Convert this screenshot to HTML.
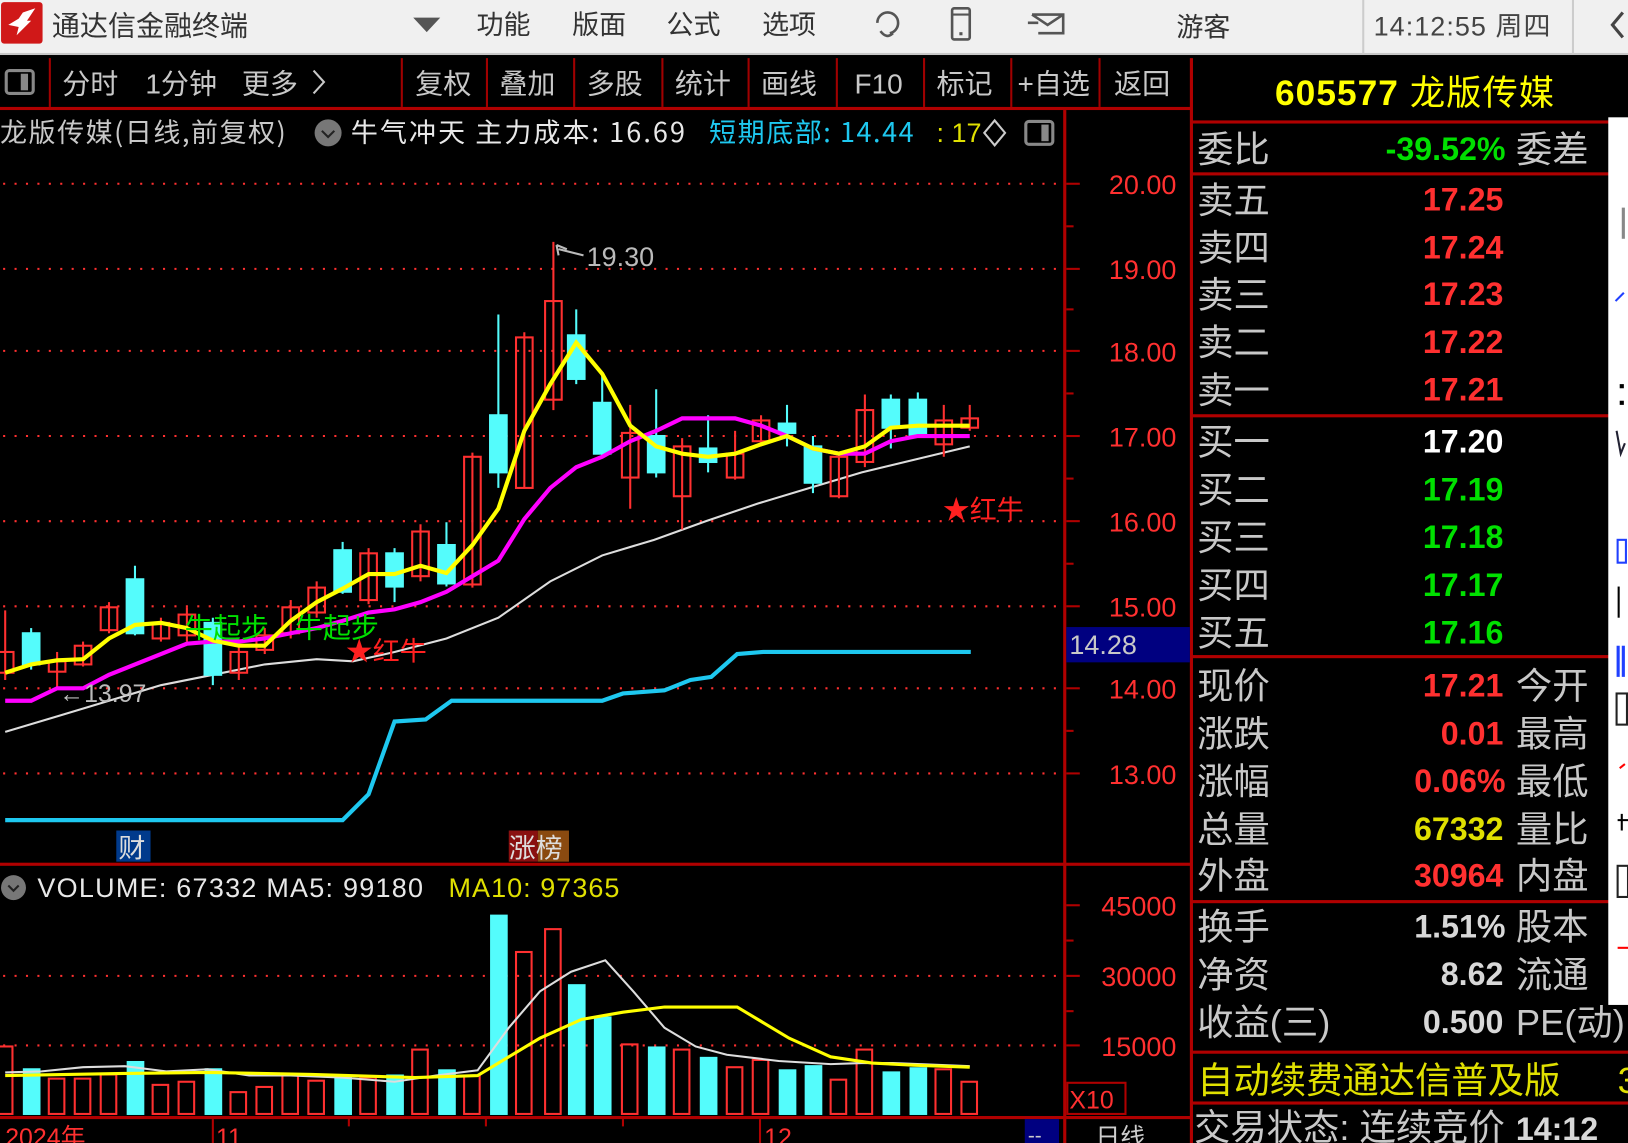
<!DOCTYPE html>
<html><head><meta charset="utf-8">
<style>
html,body{margin:0;padding:0;background:#000;overflow:hidden;width:1628px;height:1143px}
#w{position:absolute;left:0;top:0;width:1568px;height:1101px;transform:scale(1.03827,1.03815);transform-origin:0 0;background:#000}
svg{position:absolute;left:0;top:0}
text{font-family:"Liberation Sans","Noto Sans CJK SC",sans-serif}
.c{font-family:"Noto Sans CJK SC","WenQuanYi Zen Hei",sans-serif}
</style></head><body><div id="w">
<svg width="1568" height="1101" viewBox="0 0 1568 1101">
<rect x="0" y="0" width="1568" height="52" fill="#f0f0f0"/>
<rect x="0" y="51" width="1568" height="2" fill="#c8c8c8"/>
<rect x="1" y="2" width="40" height="40" rx="3" fill="#d01818"/>
<path d="M8 24 L18 18 L22 12 L34 8 L26 20 L30 20 L16 34 L18 26 Z" fill="#fff"/>
<text x="50" y="34" font-size="27" fill="#333" class="c">通达信金融终端</text>
<path d="M398 17 L424 17 L411 31 Z" fill="#555"/>
<g font-size="26" fill="#333" class="c">
<text x="459" y="33">功能</text><text x="551" y="33">版面</text><text x="642" y="33">公式</text><text x="734" y="33">选项</text>
<text x="1133" y="35">游客</text></g>
<path d="M845 22 a10 10 0 1 1 20 0 a10 10 0 0 1 -8 10 M848 30 q6 8 12 2" stroke="#555" stroke-width="2.5" fill="none"/>
<rect x="917" y="8" width="17" height="30" rx="2" stroke="#555" stroke-width="2.5" fill="none"/><line x1="917" y1="14" x2="934" y2="14" stroke="#555" stroke-width="2"/><rect x="924" y="31" width="3" height="3" fill="#555"/>
<path d="M994 14 L1024 14 L1024 32 L1000 32 M994 14 L1009 24 L1024 14 M990 22 L1000 22" stroke="#555" stroke-width="2.5" fill="none"/>
<line x1="1313" y1="0" x2="1313" y2="52" stroke="#ccc" stroke-width="2"/>
<line x1="1515" y1="0" x2="1515" y2="52" stroke="#ccc" stroke-width="2"/>
<text x="1323" y="34" font-size="26" fill="#444" letter-spacing="1">14:12:55 <tspan class="c">周四</tspan></text>
<path d="M1563 12 L1553 24 L1563 36" stroke="#444" stroke-width="3" fill="none"/>

<rect x="6" y="68" width="26" height="22" rx="3" stroke="#888" stroke-width="3" fill="none"/><rect x="20" y="71" width="7" height="16" fill="#888"/>
<g stroke="#a00000" stroke-width="2">
<line x1="48" y1="56" x2="48" y2="103"/><line x1="387" y1="56" x2="387" y2="103"/><line x1="469" y1="56" x2="469" y2="103"/><line x1="553" y1="56" x2="553" y2="103"/><line x1="638" y1="56" x2="638" y2="103"/><line x1="721" y1="56" x2="721" y2="103"/><line x1="806" y1="56" x2="806" y2="103"/><line x1="890" y1="56" x2="890" y2="103"/><line x1="974" y1="56" x2="974" y2="103"/><line x1="1059" y1="56" x2="1059" y2="103"/></g>
<rect x="0" y="103" width="1148" height="3" fill="#b00000"/>
<g font-size="27" fill="#c8c8c8" class="c">
<text x="60" y="90">分时</text><text x="140" y="90">1分钟</text><text x="233" y="90">更多</text>
<text x="400" y="90">复权</text><text x="481" y="90">叠加</text><text x="565" y="90">多股</text><text x="650" y="90">统计</text><text x="733" y="90">画线</text><text x="823" y="90" font-family="Liberation Sans">F10</text><text x="902" y="90">标记</text><text x="980" y="90">+自选</text><text x="1073" y="90">返回</text></g>
<path d="M302 68 L312 79 L302 90" stroke="#c8c8c8" stroke-width="2" fill="none"/>

<text x="0" y="137" font-size="26" fill="#c8c8c8" class="c" letter-spacing="1.5">龙版传媒(日线,前复权)</text>
<circle cx="316" cy="128" r="13" fill="#777"/><path d="M310 126 l6 6 l6 -6" stroke="#222" stroke-width="2" fill="none"/>
<text x="338" y="137" font-size="26" fill="#e8e8e8" class="c" letter-spacing="2">牛气冲天 主力成本: 16.69</text>
<text x="683" y="137" font-size="26" fill="#1ec8f0" class="c" letter-spacing="1.5">短期底部: 14.44</text>
<text x="902" y="137" font-size="26" fill="#e0e000">: 17</text>
<path d="M958 116 l10 12 l-10 12 l-10 -12 z" stroke="#ccc" stroke-width="2" fill="none"/>
<rect x="988" y="117" width="26" height="22" rx="3" stroke="#888" stroke-width="3" fill="none"/><rect x="1003" y="120" width="7" height="16" fill="#888"/>

<rect x="1024" y="106" width="3" height="995" fill="#b00000"/>
<rect x="1146" y="56" width="3" height="1045" fill="#b00000"/>
<g stroke="#ff3030" stroke-width="2" stroke-dasharray="2 9">
<line x1="3" y1="177" x2="1024" y2="177"/><line x1="3" y1="259" x2="1024" y2="259"/><line x1="3" y1="338" x2="1024" y2="338"/><line x1="3" y1="420" x2="1024" y2="420"/><line x1="3" y1="502" x2="1024" y2="502"/><line x1="3" y1="584" x2="1024" y2="584"/><line x1="3" y1="663" x2="1024" y2="663"/><line x1="3" y1="745" x2="1024" y2="745"/>
<line x1="3" y1="940" x2="1024" y2="940"/><line x1="3" y1="1007" x2="1024" y2="1007"/></g>
<g stroke="#b00000" stroke-width="2">
<line x1="1027" y1="177" x2="1040" y2="177"/><line x1="1027" y1="218" x2="1034" y2="218"/><line x1="1027" y1="259" x2="1040" y2="259"/><line x1="1027" y1="298" x2="1034" y2="298"/><line x1="1027" y1="338" x2="1040" y2="338"/><line x1="1027" y1="379" x2="1034" y2="379"/><line x1="1027" y1="420" x2="1040" y2="420"/><line x1="1027" y1="461" x2="1034" y2="461"/><line x1="1027" y1="502" x2="1040" y2="502"/><line x1="1027" y1="543" x2="1034" y2="543"/><line x1="1027" y1="584" x2="1040" y2="584"/><line x1="1027" y1="663" x2="1040" y2="663"/><line x1="1027" y1="704" x2="1034" y2="704"/><line x1="1027" y1="745" x2="1040" y2="745"/>
<line x1="1027" y1="872" x2="1040" y2="872"/><line x1="1027" y1="906" x2="1034" y2="906"/><line x1="1027" y1="940" x2="1040" y2="940"/><line x1="1027" y1="974" x2="1034" y2="974"/><line x1="1027" y1="1007" x2="1040" y2="1007"/></g>
<g font-size="26" fill="#ff3030" text-anchor="end">
<text x="1133" y="187">20.00</text><text x="1133" y="269">19.00</text><text x="1133" y="348">18.00</text><text x="1133" y="430">17.00</text><text x="1133" y="512">16.00</text><text x="1133" y="594">15.00</text><text x="1133" y="673">14.00</text><text x="1133" y="755">13.00</text>
<text x="1133" y="882">45000</text><text x="1133" y="950">30000</text><text x="1133" y="1017">15000</text></g>
<rect x="1027" y="604" width="119" height="34" fill="#000080"/>
<text x="1030" y="630" font-size="26" fill="#c8c8c8">14.28</text>
<rect x="1028" y="1043" width="56" height="30" fill="none" stroke="#b00000" stroke-width="2"/>
<text x="1030" y="1068" font-size="24" fill="#ff3030">X10</text>

<rect x="0" y="831" width="1148" height="3" fill="#b00000"/>
<rect x="0" y="1075" width="1148" height="3" fill="#b00000"/>

<polyline points="5,790 330,790 355,765 380,695 410,693 435,675 580,675 600,668 640,665 665,655 685,652 710,630 735,628 935,628" stroke="#1ec8f0" stroke-width="4" fill="none"/>
<polyline points="5,705 55,690 105,675 155,660 205,650 255,640 305,635 340,637 380,628 430,615 480,595 530,560 580,535 630,520 680,502 730,485 780,470 830,455 880,443 934,430" stroke="#ddd" stroke-width="2" fill="none"/>

<g stroke-width="2">
<g stroke="#ff3030" fill="none">
<line x1="5" y1="588" x2="5" y2="655"/><rect x="-3" y="628" width="16" height="20"/>
<line x1="55" y1="628" x2="55" y2="662"/><rect x="47" y="637" width="16" height="10"/>
<line x1="80" y1="618" x2="80" y2="642"/><rect x="72" y="622" width="16" height="18"/>
<line x1="105" y1="580" x2="105" y2="610"/><rect x="97" y="585" width="16" height="22"/>
<line x1="155" y1="595" x2="155" y2="618"/><rect x="147" y="600" width="16" height="15"/>
<line x1="180" y1="585" x2="180" y2="618"/><rect x="172" y="592" width="16" height="20"/>
<line x1="230" y1="620" x2="230" y2="655"/><rect x="222" y="628" width="16" height="20"/>
<line x1="255" y1="605" x2="255" y2="630"/><rect x="247" y="612" width="16" height="14"/>
<line x1="280" y1="578" x2="280" y2="615"/><rect x="272" y="585" width="16" height="25"/>
<line x1="305" y1="560" x2="305" y2="595"/><rect x="297" y="566" width="16" height="24"/>
<line x1="355" y1="528" x2="355" y2="582"/><rect x="347" y="533" width="16" height="45"/>
<line x1="405" y1="505" x2="405" y2="560"/><rect x="397" y="512" width="16" height="43"/>
<line x1="455" y1="436" x2="455" y2="566"/><rect x="447" y="440" width="16" height="123"/>
<line x1="505" y1="320" x2="505" y2="470"/><rect x="497" y="325" width="16" height="145"/>
<line x1="533" y1="233" x2="533" y2="395"/><rect x="525" y="290" width="16" height="95"/>
<line x1="607" y1="390" x2="607" y2="490"/><rect x="599" y="417" width="16" height="43"/>
<line x1="657" y1="422" x2="657" y2="510"/><rect x="649" y="430" width="16" height="48"/>
<line x1="708" y1="415" x2="708" y2="462"/><rect x="700" y="437" width="16" height="23"/>
<line x1="733" y1="400" x2="733" y2="430"/><rect x="725" y="405" width="16" height="20"/>
<line x1="808" y1="435" x2="808" y2="480"/><rect x="800" y="440" width="16" height="38"/>
<line x1="833" y1="380" x2="833" y2="450"/><rect x="825" y="395" width="16" height="50"/>
<line x1="909" y1="390" x2="909" y2="440"/><rect x="901" y="405" width="16" height="23"/>
<line x1="934" y1="390" x2="934" y2="415"/><rect x="926" y="403" width="16" height="9"/>
</g>
<g stroke="#54fcfc" fill="#54fcfc">
<line x1="30" y1="605" x2="30" y2="645"/><rect x="22" y="610" width="16" height="30"/>
<line x1="130" y1="545" x2="130" y2="612"/><rect x="122" y="558" width="16" height="52"/>
<line x1="205" y1="595" x2="205" y2="660"/><rect x="197" y="600" width="16" height="50"/>
<line x1="330" y1="522" x2="330" y2="572"/><rect x="322" y="530" width="16" height="40"/>
<line x1="380" y1="528" x2="380" y2="580"/><rect x="372" y="533" width="16" height="32"/>
<line x1="430" y1="503" x2="430" y2="565"/><rect x="422" y="525" width="16" height="37"/>
<line x1="480" y1="303" x2="480" y2="470"/><rect x="472" y="400" width="16" height="55"/>
<line x1="555" y1="298" x2="555" y2="370"/><rect x="547" y="323" width="16" height="42"/>
<line x1="580" y1="360" x2="580" y2="440"/><rect x="572" y="388" width="16" height="49"/>
<line x1="632" y1="375" x2="632" y2="460"/><rect x="624" y="420" width="16" height="35"/>
<line x1="682" y1="400" x2="682" y2="455"/><rect x="674" y="432" width="16" height="13"/>
<line x1="758" y1="390" x2="758" y2="430"/><rect x="750" y="408" width="16" height="9"/>
<line x1="783" y1="420" x2="783" y2="475"/><rect x="775" y="430" width="16" height="35"/>
<line x1="858" y1="380" x2="858" y2="432"/><rect x="850" y="385" width="16" height="27"/>
<line x1="884" y1="378" x2="884" y2="420"/><rect x="876" y="385" width="16" height="35"/>
</g></g>

<polyline points="5,675 30,675 55,663 80,663 105,650 130,640 155,630 180,620 205,618 230,618 255,615 280,610 305,605 330,598 355,590 380,587 405,580 430,570 455,555 480,540 505,500 530,470 555,450 580,440 607,425 632,415 657,403 682,403 708,403 733,410 758,420 783,432 808,437 833,437 858,425 884,420 909,420 934,420" stroke="#ff00ff" stroke-width="4" fill="none"/>
<polyline points="5,648 30,640 55,636 80,635 105,615 130,602 155,600 180,605 205,617 230,622 255,622 280,598 305,580 330,567 355,553 380,553 405,545 430,552 455,525 480,490 505,415 530,370 555,330 580,360 607,410 632,430 657,437 682,440 708,437 733,428 758,420 783,432 808,437 833,430 858,412 884,410 909,410 934,410" stroke="#ffff00" stroke-width="4" fill="none"/>

<g font-size="27" fill="#00e000" class="c"><text x="178" y="614">牛起步</text><text x="284" y="614">牛起步</text></g>
<g font-size="26" fill="#ff2020" class="c"><text x="333" y="636">★红牛</text><text x="908" y="500">★红牛</text></g>
<text x="57" y="676" font-size="24" fill="#bbb">←13.97</text>
<path d="M536 236 L538 246 M536 236 L546 240 M538 240 L562 246" stroke="#bbb" stroke-width="2" fill="none"/>
<text x="565" y="256" font-size="26" fill="#bbb">19.30</text>
<rect x="112" y="800" width="33" height="30" fill="#003a8c"/><text x="114" y="826" font-size="26" fill="#ddd" class="c">财</text>
<rect x="490" y="800" width="28" height="30" fill="#8a1010"/><rect x="518" y="800" width="30" height="30" fill="#8a4a10"/>
<text x="490" y="826" font-size="26" fill="#ddd" class="c">涨榜</text>

<circle cx="13" cy="855" r="12" fill="#777"/><path d="M8 853 l5 5 l5 -5" stroke="#222" stroke-width="2" fill="none"/>
<text x="36" y="864" font-size="26" fill="#e8e8e8" letter-spacing="1.2">VOLUME: 67332  MA5: 99180</text>
<text x="432" y="864" font-size="26" fill="#e0e000" letter-spacing="1">MA10: 97365</text>

<g stroke-width="2">
<g stroke="#ff3030" fill="none">
<rect x="-3" y="1008" width="15" height="65"/><rect x="47" y="1039" width="15" height="34"/><rect x="72" y="1039" width="15" height="34"/><rect x="97" y="1035" width="15" height="38"/><rect x="147" y="1045" width="15" height="28"/><rect x="172" y="1042" width="15" height="31"/><rect x="222" y="1052" width="15" height="21"/><rect x="247" y="1047" width="15" height="26"/><rect x="272" y="1035" width="15" height="38"/><rect x="297" y="1041" width="15" height="32"/><rect x="347" y="1038" width="15" height="35"/><rect x="397" y="1011" width="15" height="62"/><rect x="447" y="1036" width="15" height="37"/><rect x="497" y="917" width="15" height="156"/><rect x="525" y="895" width="15" height="178"/><rect x="599" y="1006" width="15" height="67"/><rect x="649" y="1011" width="15" height="62"/><rect x="700" y="1028" width="15" height="45"/><rect x="725" y="1021" width="15" height="52"/><rect x="800" y="1040" width="15" height="33"/><rect x="825" y="1011" width="15" height="62"/><rect x="901" y="1030" width="15" height="43"/><rect x="926" y="1042" width="15" height="31"/>
</g>
<g fill="#54fcfc">
<rect x="22" y="1029" width="17" height="45"/><rect x="122" y="1022" width="17" height="52"/><rect x="197" y="1029" width="17" height="45"/><rect x="372" y="1035" width="17" height="39"/><rect x="422" y="1030" width="17" height="44"/><rect x="472" y="881" width="17" height="193"/><rect x="547" y="948" width="17" height="126"/><rect x="572" y="979" width="17" height="95"/><rect x="624" y="1008" width="17" height="66"/><rect x="674" y="1018" width="17" height="56"/><rect x="750" y="1030" width="17" height="44"/><rect x="775" y="1026" width="17" height="48"/><rect x="850" y="1032" width="17" height="42"/><rect x="876" y="1028" width="17" height="46"/>
<rect x="322" y="1037" width="17" height="37"/>
</g></g>
<polyline points="5,1033 40,1032 80,1028 120,1027 160,1032 200,1030 240,1036 280,1036 330,1038 380,1042 420,1036 460,1031 490,990 520,955 550,936 583,925 610,955 640,990 670,1008 700,1016 750,1022 800,1025 830,1024 860,1024 934,1027" stroke="#ddd" stroke-width="2" fill="none"/>
<polyline points="5,1036 120,1034 200,1033 300,1035 400,1038 460,1036 520,1000 560,982 600,975 640,970 710,970 760,1000 800,1018 840,1024 880,1026 934,1028" stroke="#ffff00" stroke-width="3" fill="none"/>

<g stroke="#b00000" stroke-width="2"><line x1="205" y1="1078" x2="205" y2="1101"/><line x1="732" y1="1078" x2="732" y2="1101"/><line x1="336" y1="1078" x2="336" y2="1085"/><line x1="468" y1="1078" x2="468" y2="1085"/><line x1="600" y1="1078" x2="600" y2="1085"/></g>
<g font-size="24" fill="#ff3030" class="c"><text x="5" y="1104">2024年</text><text x="208" y="1104">11</text><text x="736" y="1104">12</text></g>
<rect x="987" y="1078" width="33" height="23" fill="#000080"/><text x="990" y="1100" font-size="20" fill="#ccc">--</text>
<text x="1055" y="1104" font-size="24" fill="#ccc" class="c">日线</text>

<text x="1228" y="101" font-size="34" fill="#ffff00" font-weight="bold" letter-spacing="1">605577 <tspan class="c" font-weight="normal">龙版传媒</tspan></text>
<g fill="#b00000">
<rect x="1148" y="116" width="402" height="3"/><rect x="1148" y="166" width="402" height="3"/><rect x="1148" y="399" width="402" height="3"/><rect x="1148" y="631" width="402" height="3"/><rect x="1148" y="867" width="420" height="3"/><rect x="1148" y="1012" width="420" height="3"/><rect x="1148" y="1061" width="420" height="3"/></g>
<g font-size="35" fill="#c8c8c8" class="c">
<text x="1153" y="156">委比</text><text x="1460" y="156">委差</text>
<text x="1153" y="205">卖五</text><text x="1153" y="251">卖四</text><text x="1153" y="296">卖三</text><text x="1153" y="342">卖二</text><text x="1153" y="388">卖一</text>
<text x="1153" y="438">买一</text><text x="1153" y="484">买二</text><text x="1153" y="530">买三</text><text x="1153" y="576">买四</text><text x="1153" y="622">买五</text>
<text x="1153" y="673">现价</text><text x="1460" y="673">今开</text>
<text x="1153" y="719">涨跌</text><text x="1460" y="719">最高</text>
<text x="1153" y="765">涨幅</text><text x="1460" y="765">最低</text>
<text x="1153" y="811">总量</text><text x="1460" y="811">量比</text>
<text x="1153" y="856">外盘</text><text x="1460" y="856">内盘</text>
<text x="1153" y="905">换手</text><text x="1460" y="905">股本</text>
<text x="1153" y="951">净资</text><text x="1460" y="951">流通</text>
<text x="1153" y="997">收益(三)</text><text x="1460" y="997">PE(动)</text>
<text x="1153" y="1053" fill="#e0e000">自动续费通达信普及版</text><text x="1558" y="1053" fill="#e0e000">3</text>
<text x="1150" y="1098">交易状态: 连续竞价</text></g>
<g font-size="31" font-weight="bold" text-anchor="end">
<text x="1450" y="154" fill="#00e000">-39.52%</text>
<text x="1448" y="203" fill="#ff3030">17.25</text><text x="1448" y="249" fill="#ff3030">17.24</text><text x="1448" y="294" fill="#ff3030">17.23</text><text x="1448" y="340" fill="#ff3030">17.22</text><text x="1448" y="386" fill="#ff3030">17.21</text>
<text x="1448" y="436" fill="#ffffff">17.20</text><text x="1448" y="482" fill="#00e000">17.19</text><text x="1448" y="528" fill="#00e000">17.18</text><text x="1448" y="574" fill="#00e000">17.17</text><text x="1448" y="620" fill="#00e000">17.16</text>
<text x="1448" y="671" fill="#ff3030">17.21</text><text x="1448" y="717" fill="#ff3030">0.01</text><text x="1450" y="763" fill="#ff3030">0.06%</text><text x="1448" y="809" fill="#e0e000">67332</text><text x="1448" y="854" fill="#ff3030">30964</text>
<text x="1450" y="903" fill="#d8d8d8">1.51%</text><text x="1448" y="949" fill="#d8d8d8">8.62</text><text x="1448" y="995" fill="#d8d8d8">0.500</text>
</g>
<text x="1460" y="1098" font-size="31" font-weight="bold" fill="#d8d8d8">14:12</text>
<rect x="1549" y="113" width="19" height="855" fill="#fff"/>
<rect x="1562" y="200" width="3" height="30" fill="#888"/>
<path d="M1556 290 l8 -8" stroke="#2040ff" stroke-width="2"/>
<rect x="1560" y="370" width="4" height="4" fill="#000"/><rect x="1560" y="386" width="4" height="4" fill="#000"/>
<path d="M1557 415 l4 22 l4 -10" stroke="#223" stroke-width="2" fill="none"/>
<rect x="1558" y="520" width="8" height="22" fill="none" stroke="#2040ff" stroke-width="2"/>
<rect x="1558" y="565" width="2" height="30" fill="#000"/>
<rect x="1557" y="622" width="3" height="30" fill="#2040ff"/><rect x="1562" y="622" width="3" height="30" fill="#2040ff"/>
<rect x="1557" y="668" width="10" height="30" fill="none" stroke="#222" stroke-width="2"/>
<path d="M1560 740 l5 -4" stroke="#f00" stroke-width="2"/>
<path d="M1558 790 h10 M1562 784 v16" stroke="#000" stroke-width="2"/>
<rect x="1558" y="834" width="10" height="30" fill="none" stroke="#222" stroke-width="2"/>
<rect x="1558" y="912" width="10" height="2" fill="#f00"/>
</svg>
</div></body></html>
